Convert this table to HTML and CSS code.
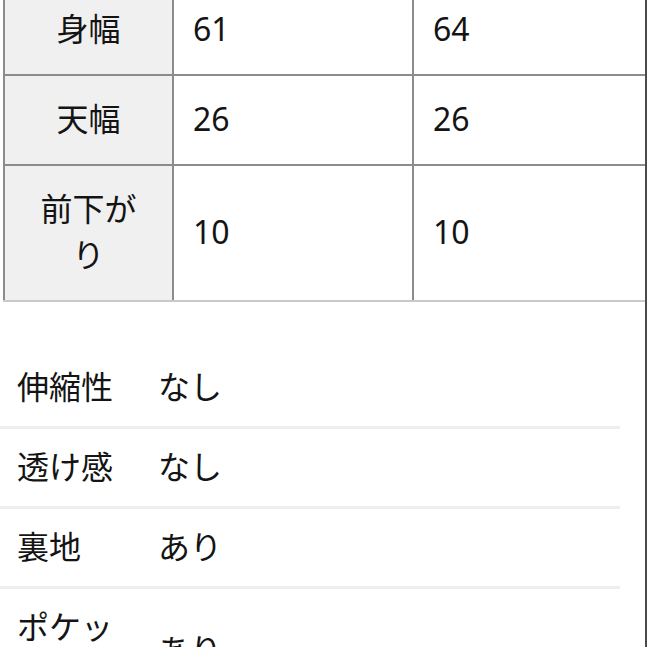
FILE: index.html
```html
<!DOCTYPE html>
<html lang="ja">
<head>
<meta charset="utf-8">
<link rel="stylesheet" href="styles.css">
</head>
<body>
<div class="page">
  <table class="size-table">
    <colgroup>
      <col class="c1"><col class="c2"><col class="c3">
    </colgroup>
    <tbody>
      <tr><th>身幅</th><td>61</td><td>64</td></tr>
      <tr><th>天幅</th><td>26</td><td>26</td></tr>
      <tr class="last"><th>前下が<br>り</th><td>10</td><td>10</td></tr>
    </tbody>
  </table>

  <div class="spec">
    <div class="spec-row"><div class="label">伸縮性</div><div class="value">なし</div></div>
    <div class="spec-row"><div class="label">透け感</div><div class="value">なし</div></div>
    <div class="spec-row"><div class="label">裏地</div><div class="value">あり</div></div>
    <div class="spec-row"><div class="label">ポケット</div><div class="value">あり</div></div>
  </div>
</div>
</body>
</html>
```

FILE: styles.css
```css
html, body {
  margin: 0;
  padding: 0;
  background: #ffffff;
  overflow: hidden;
}

body {
  font-family: "Noto Sans", "Noto Sans CJK JP", sans-serif;
  font-size: 32px;
  color: #141414;
}

.page {
  width: 645px;
  min-height: 100vh;
  border-right: 2px solid #4a4a4a;
  overflow: hidden;
}

.size-table {
  border-collapse: collapse;
  margin: -16px 0 0 3px;
  width: 643px;
  table-layout: fixed;
}

.c1 { width: 169px; }
.c2 { width: 240px; }
.c3 { width: 234px; }

.size-table th,
.size-table td {
  border: 2px solid #8c8c8c;
  padding: 20px 0 22px;
  line-height: 46px;
  font-weight: normal;
  vertical-align: middle;
}

.size-table th {
  background: #f0f0f0;
  text-align: center;
}

.size-table td {
  background: #ffffff;
  text-align: left;
  padding-left: 19px;
}

.size-table tr.last th,
.size-table tr.last td {
  border-bottom-color: #c9c9c9;
}

.size-table td:last-child {
  border-right: none;
}

.spec {
  margin-top: 47px;
  width: 620px;
}

.spec-row {
  display: grid;
  grid-template-columns: 141px 1fr;
  align-items: center;
  border-bottom: 3px solid #eeeeee;
  padding: 15px 0 16px;
  line-height: 46px;
}

.label {
  padding-left: 17px;
  padding-right: 22px;
}

.value {
  padding-left: 17px;
}
```
